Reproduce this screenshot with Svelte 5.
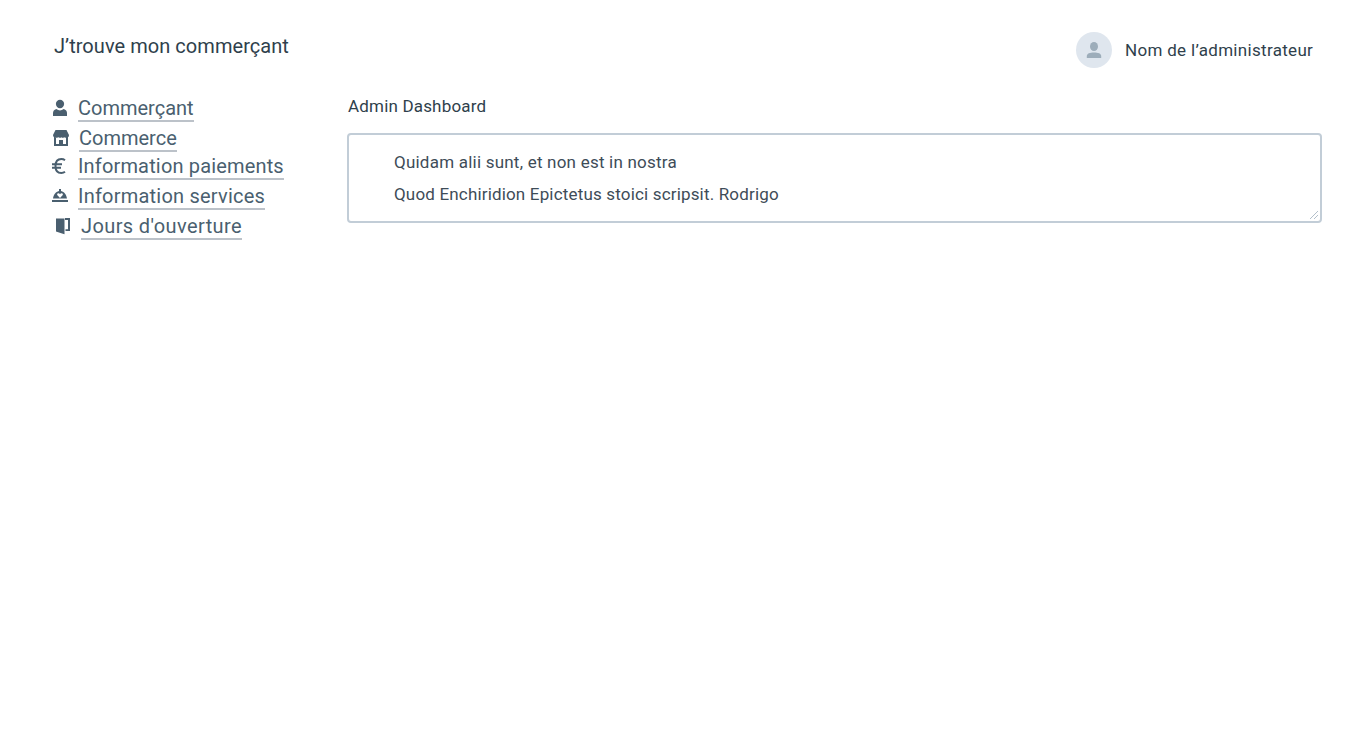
<script>
  const links = [
    { key: 'merchant', label: 'Commerçant' },
    { key: 'shop', label: 'Commerce' },
    { key: 'payment', label: 'Information paiements' },
    { key: 'service', label: 'Information services' },
    { key: 'opening', label: "Jours d'ouverture" }
  ];
</script>

<div class="page">
  <header>
    <h1>J’trouve mon commerçant</h1>
    <div class="user">
      <div class="avatar">
        <svg width="16" height="16" viewBox="0 0 16 16" fill="#9dadba">
          <ellipse cx="8" cy="4.5" rx="4" ry="4.5" />
          <path d="M.8 16v-2C.8 11.500 4 10.400 8 10.400s7.200 1.100 7.200 3.600v2z" />
        </svg>
      </div>
      <span class="name">Nom de l’administrateur</span>
    </div>
  </header>

  <div class="body">
    <nav>
      {#each links as link}
        <div class="row {link.key}">
          <svg width="18" height="18" viewBox="0 0 18 18" fill="#4a5f6f">
            {#if link.key === 'merchant'}
              <ellipse cx="9" cy="5" rx="4.100" ry="4.200" />
              <path d="M2 17v-3q0-3 3.300-4Q9 12.800 12.700 10 16 11 16 14v3z" />
            {:else if link.key === 'shop'}
              <path fill-rule="evenodd" d="M3.500 1h11L17 6q0 2-1 2.300V17H2V8.300Q1 7.600 1 6zM4 8.500V15h3v-4h4v4h3V8.500q-1 .5-1.800-.3-1.700 1-2.700 0-1.500 1-2.800 0-1.200.8-3.700.3z" />
            {:else if link.key === 'payment'}
              <path d="M14 3.200Q12.500 2 10.300 2C6.500 2 4.500 5 4.500 9s2 7 5.800 7q2.200 0 3.700-1.200M1 7.300h10M1 10.800h9" fill="none" stroke="#4a5f6f" stroke-width="2" />
            {:else if link.key === 'service'}
              <path fill-rule="evenodd" d="M8 2h2v2c3.500.7 5.500 3.900 6 7.500H2c.5-3.600 2.500-6.800 6-7.500zM9 11l2.800-3C12.300 6 9.700 5.900 9 7.200 8.300 5.900 5.700 6 6.200 8z" />
              <path d="M1 13h16v2H1z" />
            {:else}
              <path d="M2 1.500h8.500V17.300L6.500 16 2 14.500zM11 1h5v13h-4.500v-1.800H14V3h-3z" />
            {/if}
          </svg>
          <a href="#{link.key}">{link.label}</a>
        </div>
      {/each}
    </nav>
    <main>
      <h2>Admin Dashboard</h2>
      <div class="box">
        <p class="first">Quidam alii sunt, et non est in nostra</p>
        <p>Quod Enchiridion Epictetus stoici scripsit. Rodrigo</p>
        <svg class="grip" width="10" height="10" viewBox="0 0 10 10" fill="none" stroke="#b3c0cb" stroke-width="1"><path d="M1 9l8-8M5 9l4-4" /></svg>
      </div>
    </main>
  </div>
</div>

<style>
  :global(body) { background: #fff; }
  .page { box-sizing: border-box; height: 732px; padding: 32px 42px 0 52px; font-family: Roboto, sans-serif; color: #2f3f4c; overflow: hidden; }
  header { display: flex; justify-content: space-between; height: 60px; }
  h1 { margin: 0; padding-left: 2px; font-size: 20px; line-height: 28px; font-weight: 400; letter-spacing: .05px; white-space: nowrap; }
  .user { display: flex; align-items: center; height: 36px; padding-right: 8px; gap: 13px; font-size: 17px; white-space: nowrap; }
  .avatar { display: flex; align-items: center; justify-content: center; width: 36px; height: 36px; border-radius: 50%; background: #dfe6ee; }
  .name { width: 189px; letter-spacing: .31px; }
  .body { display: flex; }
  nav { width: 295px; padding-top: 4px; flex: none; }
  .row { display: flex; height: 30px; font-size: 20px; }
  .row.shop { height: 28px; }
  .row svg { flex: none; margin: 3px 9px 0 -1px; }
  .row.shop svg { margin: 3px 9px 0 0; }
  .row.opening svg { margin: 3px 9px 0 2px; }
  .payment a { letter-spacing: .16px; }
  .service a { letter-spacing: .22px; }
  .opening a { letter-spacing: .39px; }
  a { height: 24px; line-height: 24px; color: #4a5f6f; text-decoration: none; white-space: nowrap; border-bottom: 2px solid #bcc2c9; }
  main { flex: 1; }
  h2 { margin: 0; padding-left: 1px; font-size: 17px; font-weight: 400; line-height: 28px; letter-spacing: .18px; }
  .box { position: relative; box-sizing: border-box; height: 90px; margin-top: 13px; border: 2px solid #c2cdd7; border-radius: 4px; padding: 11px 0 0 45px; }
  p { margin: 0; font-size: 17px; line-height: 32px; letter-spacing: .17px; color: #3e4c58; white-space: nowrap; }
  .first { letter-spacing: .22px; }
  .grip { position: absolute; right: 1px; bottom: 1px; }
</style>
